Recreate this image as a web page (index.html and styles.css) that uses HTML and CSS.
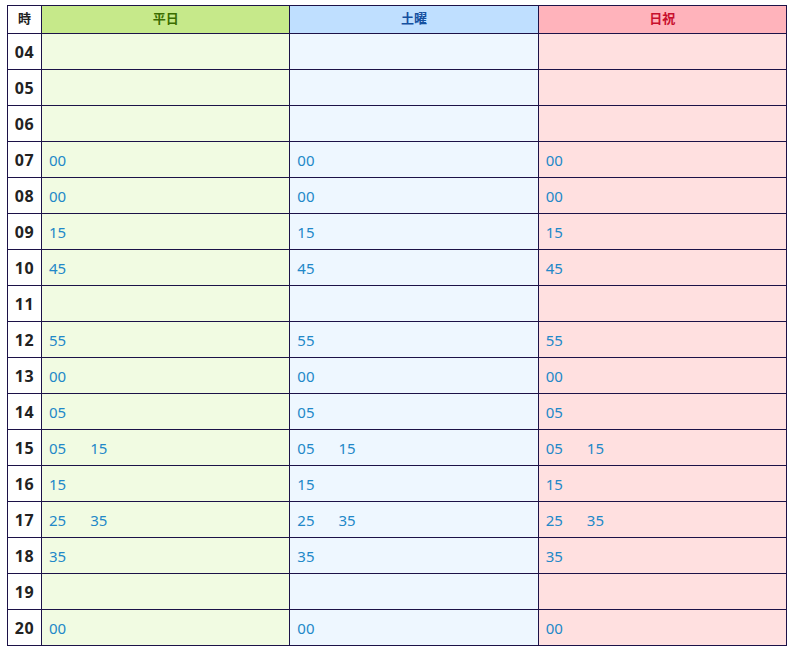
FILE: index.html
```html
<!DOCTYPE html>
<html lang="ja">
<head>
<meta charset="utf-8">
<link rel="stylesheet" href="styles.css">
</head>
<body>
<table class="tt">
<thead>
<tr><th class="h-hour">時</th><th class="h-wd">平日</th><th class="h-sa">土曜</th><th class="h-ho">日祝</th></tr>
</thead>
<tbody>
<tr><th class="hour">04</th><td class="wd"></td><td class="sa"></td><td class="ho"></td></tr>
<tr><th class="hour">05</th><td class="wd"></td><td class="sa"></td><td class="ho"></td></tr>
<tr><th class="hour">06</th><td class="wd"></td><td class="sa"></td><td class="ho"></td></tr>
<tr><th class="hour">07</th><td class="wd"><span class="m">00</span></td><td class="sa"><span class="m">00</span></td><td class="ho"><span class="m">00</span></td></tr>
<tr><th class="hour">08</th><td class="wd"><span class="m">00</span></td><td class="sa"><span class="m">00</span></td><td class="ho"><span class="m">00</span></td></tr>
<tr><th class="hour">09</th><td class="wd"><span class="m">15</span></td><td class="sa"><span class="m">15</span></td><td class="ho"><span class="m">15</span></td></tr>
<tr><th class="hour">10</th><td class="wd"><span class="m">45</span></td><td class="sa"><span class="m">45</span></td><td class="ho"><span class="m">45</span></td></tr>
<tr><th class="hour">11</th><td class="wd"></td><td class="sa"></td><td class="ho"></td></tr>
<tr><th class="hour">12</th><td class="wd"><span class="m">55</span></td><td class="sa"><span class="m">55</span></td><td class="ho"><span class="m">55</span></td></tr>
<tr><th class="hour">13</th><td class="wd"><span class="m">00</span></td><td class="sa"><span class="m">00</span></td><td class="ho"><span class="m">00</span></td></tr>
<tr><th class="hour">14</th><td class="wd"><span class="m">05</span></td><td class="sa"><span class="m">05</span></td><td class="ho"><span class="m">05</span></td></tr>
<tr><th class="hour">15</th><td class="wd"><span class="m">05</span><span class="m">15</span></td><td class="sa"><span class="m">05</span><span class="m">15</span></td><td class="ho"><span class="m">05</span><span class="m">15</span></td></tr>
<tr><th class="hour">16</th><td class="wd"><span class="m">15</span></td><td class="sa"><span class="m">15</span></td><td class="ho"><span class="m">15</span></td></tr>
<tr><th class="hour">17</th><td class="wd"><span class="m">25</span><span class="m">35</span></td><td class="sa"><span class="m">25</span><span class="m">35</span></td><td class="ho"><span class="m">25</span><span class="m">35</span></td></tr>
<tr><th class="hour">18</th><td class="wd"><span class="m">35</span></td><td class="sa"><span class="m">35</span></td><td class="ho"><span class="m">35</span></td></tr>
<tr><th class="hour">19</th><td class="wd"></td><td class="sa"></td><td class="ho"></td></tr>
<tr><th class="hour">20</th><td class="wd"><span class="m">00</span></td><td class="sa"><span class="m">00</span></td><td class="ho"><span class="m">00</span></td></tr>
</tbody>
</table>
</body>
</html>
```
FILE: styles.css
```css
html, body {
  margin: 0;
  padding: 0;
  background: #ffffff;
}
body {
  padding: 5px 0 0 7px;
  font-family: "Noto Sans", "Noto Sans CJK JP", sans-serif;
}
.tt {
  border-collapse: collapse;
  width: 780px;
  table-layout: fixed;
}
.tt th, .tt td {
  border: 1px solid #1c1248;
  padding: 0;
  line-height: 1;
  box-sizing: border-box;
}
.tt thead tr { height: 28px; }
.tt thead th {
  height: 28px;
  font-size: 13px;
  font-weight: bold;
  text-align: center;
  vertical-align: middle;
  padding-bottom: 2px;
}
.h-hour { width: 34px; background: #ffffff; color: #222222; }
.h-wd { background: #c6e98a; color: #3b6d00; }
.h-sa { background: #bfdfff; color: #15509f; }
.h-ho { background: #ffb3bb; color: #c8102e; }
.tt tbody tr { height: 36px; }
.tt tbody th, .tt tbody td {
  height: 36px;
  vertical-align: middle;
}
.hour {
  font-size: 16px;
  font-weight: bold;
  color: #222222;
  text-align: center;
  background: #ffffff;
  letter-spacing: 0.5px;
  padding-bottom: 2px;
}
.tt td {
  padding-left: 7px;
  text-align: left;
}
.wd { background: #f1fbe2; }
.sa { background: #eef7ff; }
.ho { background: #ffe0e0; }
.m {
  display: inline-block;
  font-size: 15px;
  color: #2288c8;
  margin-right: 24px;
}
```
